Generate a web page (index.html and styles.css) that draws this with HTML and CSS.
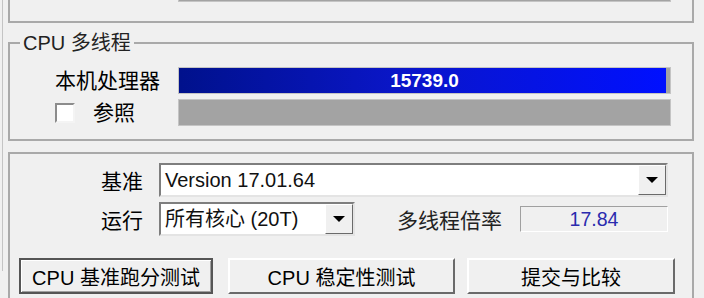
FILE: index.html
```html
<!DOCTYPE html>
<html lang="zh-CN">
<head>
    <meta charset="UTF-8">
    <title>CPU 跑分</title>
    <link rel="stylesheet" href="styles.css">
</head>
<body>
    <div class="tab">
        <!-- 上一组（单线程），只露出底部 -->
        <div class="group prev">
            <div class="bench-row">
                <label class="check"><span class="box"></span>参照</label>
                <div class="bar"></div>
            </div>
        </div>

        <fieldset class="group">
            <legend>CPU 多线程</legend>
            <div class="bench-rows">
                <div class="bench-row">
                    <span class="name">本机处理器</span>
                    <div class="bar">
                        <div class="fill" style="width: 99.2%"></div>
                        <span class="score">15739.0</span>
                    </div>
                </div>
                <div class="bench-row">
                    <label class="check"><span class="box"></span>参照</label>
                    <div class="bar"></div>
                </div>
            </div>
        </fieldset>

        <div class="panel">
            <div class="field-row">
                <span class="field-label">基准</span>
                <div class="combo wide">
                    <span class="combo-text">Version 17.01.64</span>
                    <span class="drop"></span>
                </div>
            </div>
            <div class="field-row">
                <span class="field-label">运行</span>
                <div class="combo narrow">
                    <span class="combo-text">所有核心 (20T)</span>
                    <span class="drop"></span>
                </div>
                <span class="ratio-label">多线程倍率</span>
                <div class="readout">17.84</div>
            </div>
            <div class="buttons">
                <button class="btn default b1">CPU 基准跑分测试</button>
                <button class="btn b2">CPU 稳定性测试</button>
                <button class="btn b3">提交与比较</button>
            </div>
        </div>
    </div>
</body>
</html>
```

FILE: styles.css
```css
body {
    margin: 0;
    width: 704px;
    height: 298px;
    overflow: hidden;
    background-color: #f0f0f0;
    font-family: "Liberation Sans", "Noto Sans CJK SC", sans-serif;
    color: #000;
}

.tab {
    margin-left: 2px;
    border-left: 1px solid #c4c4c4;
    height: 298px;
    padding-left: 5px;
}

.group {
    width: 682px;
    margin: 0;
    padding: 0 21px 13px 45px;
    border: 2px solid #a9a9a9;
    box-sizing: border-box;
    width: 686px;
}

.group.prev {
    margin-top: -27px;
    padding-bottom: 19px;
    padding-top: 0;
}

fieldset.group {
    margin-top: 9px;
    padding-top: 0;
    min-width: 0;
}

legend {
    margin-left: 10px;
    padding: 0 3px;
    font-size: 20px;
    line-height: 22px;
    color: #222;
}

fieldset.group legend {
    margin-left: -35px;
}

.bench-rows {
    padding-top: 13px;
    display: flex;
    flex-direction: column;
    gap: 5px;
}

.bench-row {
    display: grid;
    grid-template-columns: 123px 1fr;
    align-items: center;
    height: 27px;
}

.name {
    font-size: 21px;
    line-height: 27px;
}

.check {
    display: flex;
    align-items: center;
    gap: 18px;
    font-size: 21px;
    line-height: 27px;
}

.box {
    width: 20px;
    height: 20px;
    box-sizing: border-box;
    background-color: #fff;
    border: 2px solid;
    border-color: #8c8c8c #f4f4f4 #f4f4f4 #8c8c8c;
}

.bar {
    position: relative;
    height: 27px;
    background-color: #a3a3a3;
    border: 1px solid #c4c4c4;
    box-sizing: border-box;
}

.fill {
    height: 100%;
    background: linear-gradient(to right, #00118c, #0a16c8 45%, #0010ff);
}

.score {
    position: absolute;
    inset: 0;
    display: flex;
    align-items: center;
    justify-content: center;
    color: #fff;
    font-weight: bold;
    font-size: 19px;
}

.panel {
    margin-top: 11px;
    width: 686px;
    height: 170px;
    box-sizing: border-box;
    border: 2px solid #a9a9a9;
    padding-top: 9px;
}

.field-row {
    display: flex;
    align-items: center;
    height: 34px;
    margin-bottom: 5px;
}

.field-label {
    width: 133px;
    margin-right: 16px;
    text-align: right;
    font-size: 21px;
}

.combo {
    display: flex;
    height: 34px;
    box-sizing: border-box;
    background-color: #fff;
    border: 2px solid;
    border-color: #7e7e7e #e4e4e4 #e4e4e4 #7e7e7e;
}

.combo.wide {
    width: 509px;
}

.combo.narrow {
    width: 196px;
}

.combo-text {
    flex: 1;
    padding-left: 4px;
    font-size: 20px;
    line-height: 30px;
    color: #111;
}

.drop {
    width: 28px;
    box-sizing: border-box;
    background-color: #f0f0f0;
    border: 1px solid;
    border-color: #fff #6a6a6a #6a6a6a #fff;
    display: flex;
    align-items: center;
    justify-content: center;
}

.drop::after {
    content: "";
    border-left: 6px solid transparent;
    border-right: 6px solid transparent;
    border-top: 6px solid #000;
}

.ratio-label {
    margin-left: 42px;
    margin-right: 18px;
    font-size: 21px;
    color: #222;
}

.readout {
    width: 148px;
    height: 26px;
    box-sizing: border-box;
    border: 1px solid;
    border-color: #a0a0a0 #fff #fff #a0a0a0;
    text-align: center;
    font-size: 19.5px;
    line-height: 24px;
    color: #2b2bae;
}

.buttons {
    display: flex;
    margin-top: 22px;
    padding-left: 9px;
}

.btn {
    height: 36px;
    padding: 0;
    background-color: #f0f0f0;
    border: 2px solid;
    border-color: #fff #6a6a6a #6a6a6a #fff;
    font-family: "Liberation Sans", "Noto Sans CJK SC", sans-serif;
    font-size: 20px;
    color: #000;
}

.btn.default {
    border-color: #555;
    box-shadow: inset 1px 1px 0 #fff, inset -1px -1px 0 #a0a0a0;
}

.b1 {
    width: 194px;
}

.b2 {
    width: 227px;
    margin-left: 15px;
}

.b3 {
    width: 208px;
    margin-left: 12px;
}
```
